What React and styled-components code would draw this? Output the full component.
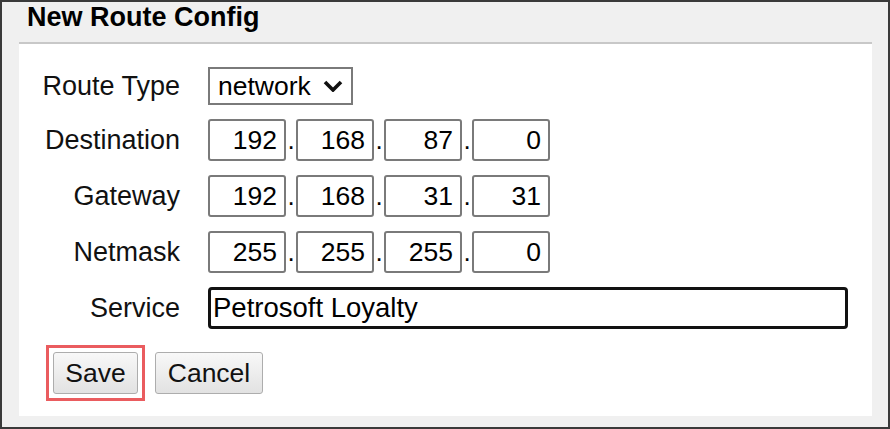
import React from "react";
import styled, { createGlobalStyle } from "styled-components";

const GlobalStyle = createGlobalStyle`
  html, body {
    margin: 0;
    padding: 0;
    background: #ffffff;
  }
  * {
    box-sizing: border-box;
  }
`;

const ipRows = [
  { label: "Destination", octets: ["192", "168", "87", "0"] },
  { label: "Gateway", octets: ["192", "168", "31", "31"] },
  { label: "Netmask", octets: ["255", "255", "255", "0"] },
];

const IpField = ({ octets }) => {
  return (
    <IpRow>
      {octets.map((value, i) => (
        <React.Fragment key={i}>
          {i > 0 && <Dot>.</Dot>}
          <Octet type="text" defaultValue={value} />
        </React.Fragment>
      ))}
    </IpRow>
  );
};

const App = () => {
  return (
    <Frame>
      <GlobalStyle />
      <Title>New Route Config</Title>
      <Panel>
        <Form>
          <Label>Route Type</Label>
          <SelectBox>
            <Select defaultValue="network">
              <option value="network">network</option>
              <option value="host">host</option>
            </Select>
            <Chevron viewBox="0 0 20 12" width="20" height="12">
              <path
                d="M2 2 L10 10 L18 2"
                fill="none"
                stroke="#111"
                strokeWidth="3.6"
              />
            </Chevron>
          </SelectBox>

          {ipRows.map((row) => (
            <React.Fragment key={row.label}>
              <Label>{row.label}</Label>
              <IpField octets={row.octets} />
            </React.Fragment>
          ))}

          <Label>Service</Label>
          <ServiceInput type="text" defaultValue="Petrosoft Loyalty" />
        </Form>

        <Buttons>
          <Highlight>
            <Button $width={85}>Save</Button>
          </Highlight>
          <Button $width={108}>Cancel</Button>
        </Buttons>
      </Panel>
    </Frame>
  );
};

const font = `"Liberation Sans", Arial, sans-serif`;

const Frame = styled.div`
  width: 890px;
  height: 429px;
  border: 2px solid #3a3a3a;
  background: #f0f0f0;
  display: flex;
  flex-direction: column;
  font-family: ${font};
`;

const Title = styled.div`
  font-size: 27px;
  font-weight: bold;
  line-height: 30px;
  color: #000;
  padding: 0 0 10px 25px;
`;

const Panel = styled.div`
  flex: 1;
  margin: 0 16px 11px 17px;
  background: #ffffff;
  border-top: 2px solid #c8c8c8;
  padding: 23px 0 0 0;
`;

const Form = styled.div`
  display: grid;
  grid-template-columns: 161px 1fr;
  column-gap: 28px;
  row-gap: 14px;
  align-items: center;
  padding-right: 23px;
`;

const Label = styled.div`
  font-size: 27px;
  color: #111;
  text-align: right;
  white-space: nowrap;
`;

const SelectBox = styled.label`
  display: flex;
  align-items: center;
  width: 145px;
  height: 38px;
  border: 2px solid #7a7a7a;
  background: #fff;
`;

const Select = styled.select`
  appearance: none;
  border: none;
  outline: none;
  background: transparent;
  font-family: ${font};
  font-size: 26.5px;
  color: #000;
  padding: 0 0 0 8px;
  margin: 0;
  width: 113px;
  cursor: pointer;
`;

const Chevron = styled.svg`
  pointer-events: none;
`;

const IpRow = styled.div`
  display: flex;
  align-items: baseline;
`;

const Dot = styled.span`
  width: 10px;
  text-align: center;
  font-size: 26px;
  color: #000;
`;

const Octet = styled.input`
  width: 78px;
  height: 42px;
  border: 2px solid #7a7a7a;
  border-radius: 3px;
  padding: 0 7px 0 4px;
  text-align: right;
  font-family: ${font};
  font-size: 26.5px;
  color: #000;
  background: #fff;
  outline: none;
`;

const ServiceInput = styled.input`
  width: 640px;
  height: 42px;
  border: 3px solid #121212;
  border-radius: 4px;
  padding: 0 0 0 2px;
  font-family: ${font};
  font-size: 27.5px;
  color: #000;
  background: #fff;
  outline: none;
`;

const Buttons = styled.div`
  display: flex;
  align-items: center;
  gap: 10px;
  margin-top: 16px;
  padding-left: 27px;
`;

const Highlight = styled.div`
  display: flex;
  border: 3px solid #ea5c5f;
  padding: 4px;
`;

const Button = styled.button`
  width: ${(props) => props.$width}px;
  height: 42px;
  border: 1px solid #adadad;
  border-radius: 3px;
  background: linear-gradient(#f8f8f8, #e2e2e2);
  font-family: ${font};
  font-size: 26.5px;
  color: #111;
  padding: 0;
  cursor: pointer;
`;

export default App;
